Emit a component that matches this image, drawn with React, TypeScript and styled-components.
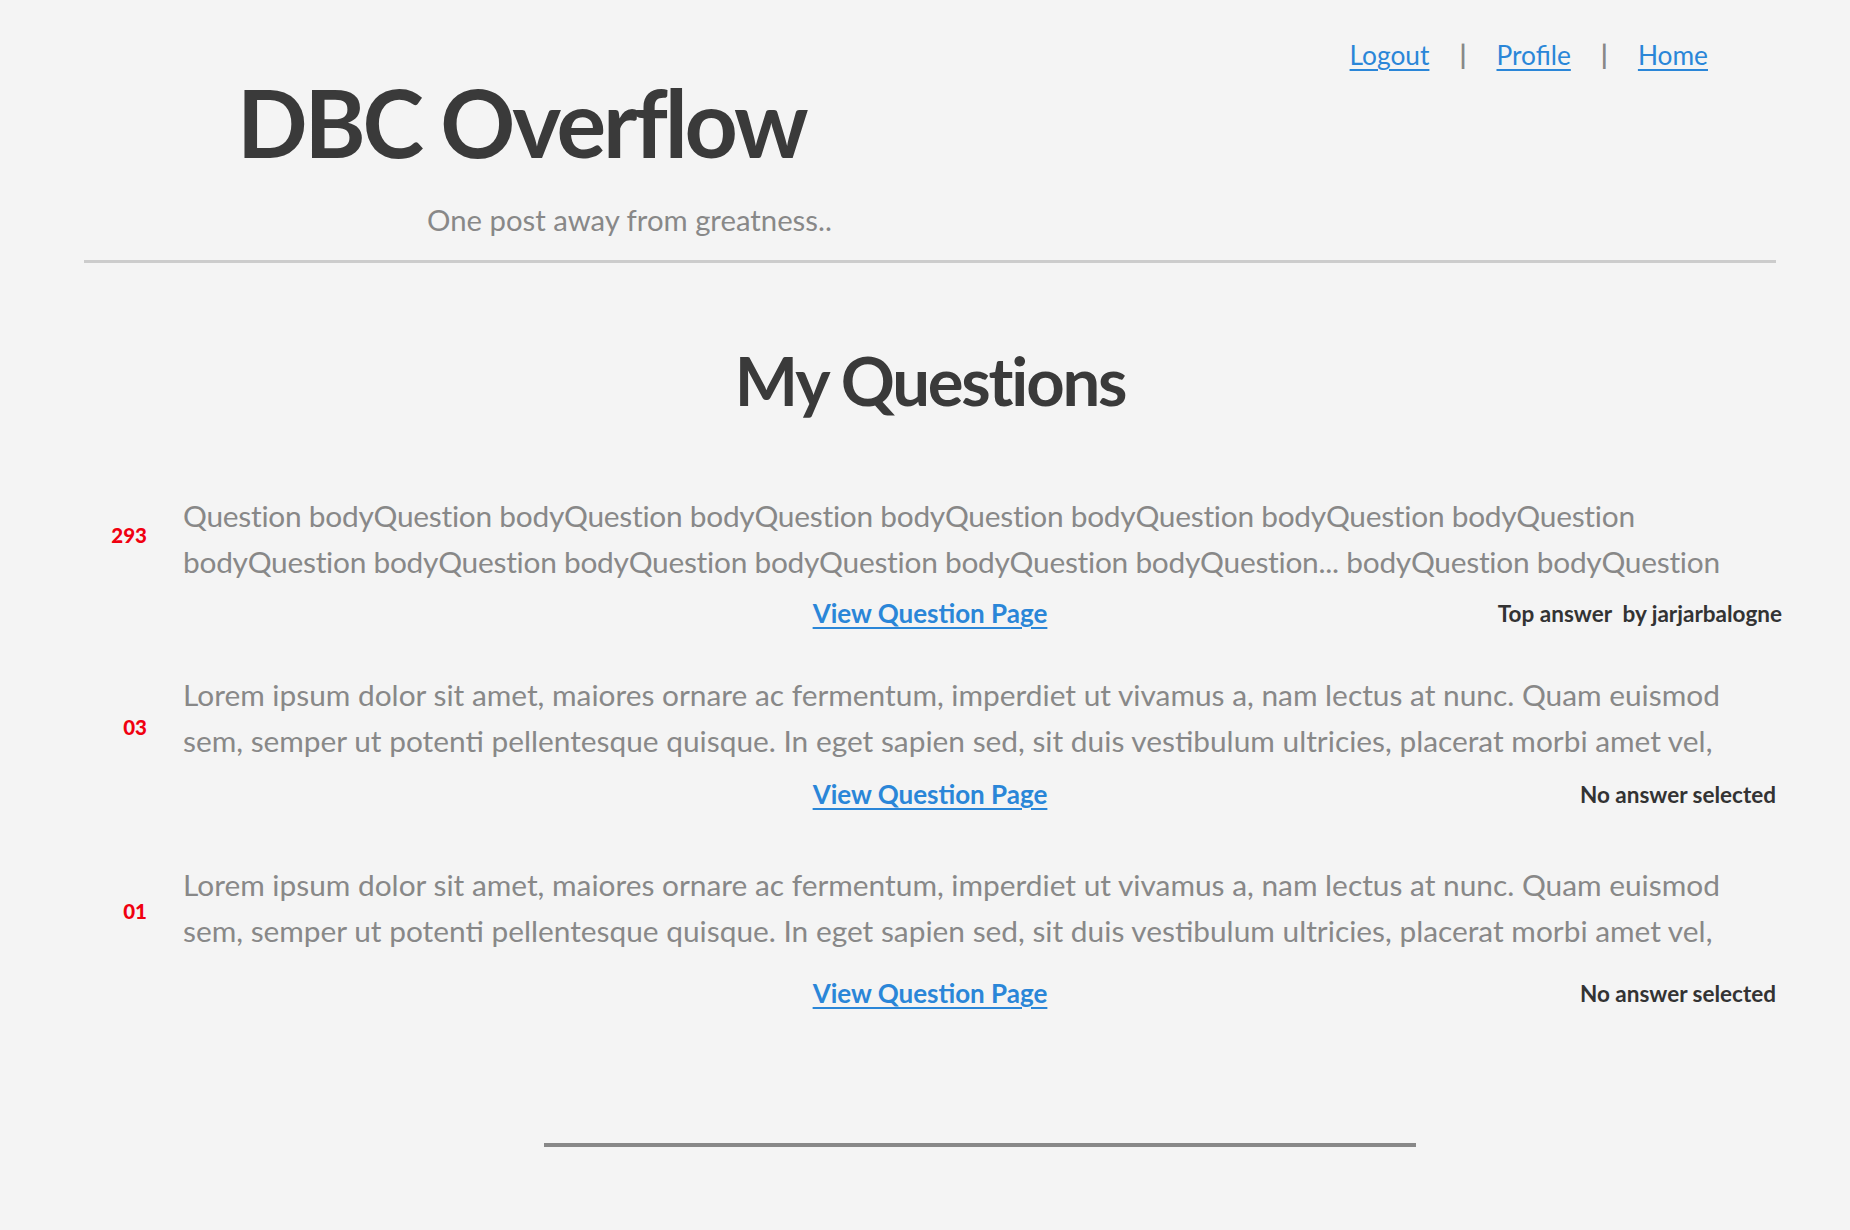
import React from "react";
import styled, { createGlobalStyle } from "styled-components";

const GlobalStyle = createGlobalStyle`
  html, body {
    margin: 0;
    padding: 0;
    background: #f4f4f4;
    font-family: Lato, "Open Sans", sans-serif;
  }
`;

const Page = styled.div`
  width: 1850px;
  min-height: 1230px;
  background: #f4f4f4;
`;

const Header = styled.header`
  display: flex;
  flex-direction: column;
  padding-top: 38px;
`;

const Nav = styled.nav`
  display: flex;
  justify-content: flex-end;
  align-items: center;
  gap: 30px;
  padding-right: 142px;
  height: 34px;
`;

const NavLink = styled.a`
  font-size: 26.3px;
  line-height: 34px;
  color: #2a86d8;
  text-decoration: underline;
  text-underline-offset: 4px;
  cursor: pointer;
`;

const Sep = styled.span`
  font-size: 27px;
  font-weight: 700;
  line-height: 34px;
  color: #888;
`;

const Title = styled.h1`
  margin: 4px 0 0 237px;
  font-size: 93px;
  line-height: 93px;
  font-weight: 700;
  letter-spacing: -3.2px;
  color: #3a3a3a;
`;

const Tagline = styled.p`
  margin: 34px 0 0 427px;
  font-size: 29.3px;
  line-height: 34px;
  color: #888;
`;

const HeaderRule = styled.hr`
  margin: 23px 74px 0 84px;
  border: none;
  height: 3px;
  background: #cccccc;
`;

const Main = styled.main`
  margin: 0 74px 0 84px;
  display: flex;
  flex-direction: column;
`;

const PageTitle = styled.h2`
  margin: 84px 0 79px;
  text-align: center;
  font-size: 67px;
  line-height: 67px;
  font-weight: 700;
  letter-spacing: -2.2px;
  color: #3a3a3a;
`;

const QuestionList = styled.ol`
  list-style: none;
  margin: 0;
  padding: 0;
  display: flex;
  flex-direction: column;
`;

const QuestionItem = styled.li<{ $after: number }>`
  display: grid;
  grid-template-columns: 99px 1fr;
  margin-bottom: ${(p) => p.$after}px;
`;

const Votes = styled.span<{ $shift: number }>`
  align-self: center;
  justify-self: end;
  margin-right: 36px;
  transform: translateY(${(p) => p.$shift}px);
  font-size: 20.5px;
  font-weight: 900;
  color: #f00010;
`;

const Body = styled.p<{ $track: number }>`
  margin: 0;
  padding-right: 30px;
  font-size: 29.85px;
  line-height: 46px;
  letter-spacing: ${(p) => p.$track}px;
  color: #888;
`;

const ItemFooter = styled.div<{ $top: number }>`
  grid-column: 1 / -1;
  display: grid;
  grid-template-columns: 1fr auto 1fr;
  align-items: center;
  margin-top: ${(p) => p.$top}px;
  height: 30px;
`;

const ViewLink = styled.a`
  grid-column: 2;
  font-size: 26px;
  font-weight: 700;
  color: #2a86d8;
  text-decoration: underline;
  text-underline-offset: 4px;
  cursor: pointer;
`;

const AnswerNote = styled.span<{ $overhang: number }>`
  grid-column: 3;
  justify-self: end;
  margin-right: -${(p) => p.$overhang}px;
  font-size: 22.5px;
  font-weight: 700;
  color: #333;
  white-space: pre;
`;

const FooterRule = styled.hr`
  margin: 0 434px 0 544px;
  border: none;
  height: 4px;
  background: #888;
`;

const lorem =
  "Lorem ipsum dolor sit amet, maiores ornare ac fermentum, imperdiet ut vivamus a, nam lectus at nunc. Quam euismod sem, semper ut potenti pellentesque quisque. In eget sapien sed, sit duis vestibulum ultricies, placerat morbi amet vel,";

const qBody =
  "Question" +
  " bodyQuestion".repeat(13) +
  "..." +
  " bodyQuestion".repeat(2);

const questions = [
  {
    votes: "293",
    body: qBody,
    track: -0.25,
    note: "Top answer  by jarjarbalogne",
    overhang: 6,
    top: 12,
    after: 45,
    shift: -4,
  },
  {
    votes: "03",
    body: lorem,
    track: 0,
    note: "No answer selected",
    overhang: 0,
    top: 14,
    after: 54,
    shift: 9,
  },
  {
    votes: "01",
    body: lorem,
    track: 0,
    note: "No answer selected",
    overhang: 0,
    top: 23,
    after: 136,
    shift: 3,
  },
];

export default function App() {
  return (
    <Page>
      <GlobalStyle />
      <Header>
        <Nav>
          <NavLink>Logout</NavLink>
          <Sep>|</Sep>
          <NavLink>Profile</NavLink>
          <Sep>|</Sep>
          <NavLink>Home</NavLink>
        </Nav>
        <Title>DBC Overflow</Title>
        <Tagline>One post away from greatness..</Tagline>
      </Header>
      <HeaderRule />
      <Main>
        <PageTitle>My Questions</PageTitle>
        <QuestionList>
          {questions.map((q, i) => (
            <QuestionItem key={i} $after={q.after}>
              <Votes $shift={q.shift}>{q.votes}</Votes>
              <Body $track={q.track}>{q.body}</Body>
              <ItemFooter $top={q.top}>
                <ViewLink>View Question Page</ViewLink>
                <AnswerNote $overhang={q.overhang}>{q.note}</AnswerNote>
              </ItemFooter>
            </QuestionItem>
          ))}
        </QuestionList>
      </Main>
      <FooterRule />
    </Page>
  );
}
